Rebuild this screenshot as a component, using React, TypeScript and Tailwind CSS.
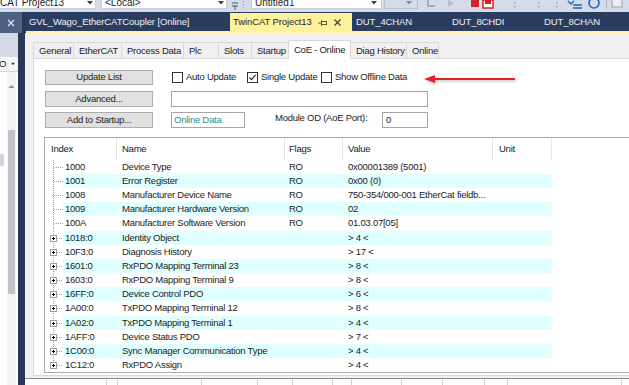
import React from "react";

type Row = { idx: string; name: string; flags?: string; value: string; plus?: boolean };

const rows: Row[] = [
  { idx: "1000", name: "Device Type", flags: "RO", value: "0x00001389 (5001)" },
  { idx: "1001", name: "Error Register", flags: "RO", value: "0x00 (0)" },
  { idx: "1008", name: "Manufacturer Device Name", flags: "RO", value: "750-354/000-001 EtherCat fieldb..." },
  { idx: "1009", name: "Manufacturer Hardware Version", flags: "RO", value: "02" },
  { idx: "100A", name: "Manufacturer Software Version", flags: "RO", value: "01.03.07[05]" },
  { idx: "1018:0", name: "Identity Object", value: "> 4 <", plus: true },
  { idx: "10F3:0", name: "Diagnosis History", value: "> 17 <", plus: true },
  { idx: "1601:0", name: "RxPDO Mapping Terminal 23", value: "> 8 <", plus: true },
  { idx: "1603:0", name: "RxPDO Mapping Terminal 9", value: "> 8 <", plus: true },
  { idx: "16FF:0", name: "Device Control PDO", value: "> 6 <", plus: true },
  { idx: "1A00:0", name: "TxPDO Mapping Terminal 12", value: "> 8 <", plus: true },
  { idx: "1A02:0", name: "TxPDO Mapping Terminal 1", value: "> 4 <", plus: true },
  { idx: "1AFF:0", name: "Device Status PDO", value: "> 7 <", plus: true },
  { idx: "1C00:0", name: "Sync Manager Communication Type", value: "> 4 <", plus: true },
  { idx: "1C12:0", name: "RxPDO Assign", value: "> 4 <", plus: true },
];

const tabs = [
  { label: "General", w: "w-[41px]" },
  { label: "EtherCAT", w: "w-[49px]" },
  { label: "Process Data", w: "w-[63px]" },
  { label: "Plc", w: "w-[36px]" },
  { label: "Slots", w: "w-[34px]" },
  { label: "Startup", w: "w-[38px]" },
  { label: "CoE - Online", w: "w-[63px]", active: true },
  { label: "Diag History", w: "w-[57px]" },
  { label: "Online", w: "w-[33px]" },
];

function Caret({ className = "" }: { className?: string }) {
  return (
    <svg width="6" height="4" viewBox="0 0 6 4" className={className}>
      <path d="M0 0 L6 0 L3 3.5 Z" fill="#3c3c3c" />
    </svg>
  );
}

function TopToolbar() {
  return (
    <div className="h-[12px] bg-[#d6dbe9] flex items-start text-[10px] overflow-hidden">
      <div className="w-[96px] h-[9px] bg-white border-r border-b border-[#c8cedb] flex items-end justify-between pr-[2px]">
        <span className="leading-[10px] mb-[0px] text-[#1e1e1e]">CAT Project13</span>
        <Caret className="mb-[3px]" />
      </div>
      <div className="ml-[5px] w-[126px] h-[9px] bg-white border-x border-b border-[#c8cedb] flex items-end justify-between pl-[3px] pr-[2px]">
        <span className="leading-[10px] mb-[0px] text-[#1e1e1e]">&lt;Local&gt;</span>
        <Caret className="mb-[3px]" />
      </div>
      <svg width="10" height="10" viewBox="0 0 10 10" className="ml-[3px] mt-[1px]">
        <path d="M2 2 L8 2 M2 5 L8 5 M5 5 L5 9" stroke="#555" strokeWidth="1" />
      </svg>
      <svg width="4" height="10" viewBox="0 0 4 10" className="ml-[2px]">
        <rect x="1" y="1" width="1" height="1" fill="#999" />
        <rect x="1" y="4" width="1" height="1" fill="#999" />
        <rect x="1" y="7" width="1" height="1" fill="#999" />
      </svg>
      <div className="ml-[5px] w-[131px] h-[9px] bg-white border-x border-b border-[#c8cedb] flex items-end justify-between pl-[3px] pr-[4px]">
        <span className="leading-[10px] mb-[0px] text-[#1e1e1e]">Untitled1</span>
        <Caret className="mb-[3px]" />
      </div>
      <div className="ml-[2px] w-[34px] h-[9px] border-x border-b border-[#b8bfcf] flex items-end justify-end pr-[5px]">
        <Caret className="mb-[3px] opacity-50" />
      </div>
      <svg width="14" height="9" viewBox="0 0 14 9" className="ml-[8px]">
        <path d="M2 0 L2 6 L9 6" stroke="#9aa0ad" strokeWidth="1.5" fill="none" />
      </svg>
      <svg width="12" height="9" viewBox="0 0 12 9" className="ml-[5px]">
        <path d="M3 0 L9 3 L3 7 Z" fill="#b5bac4" />
      </svg>
      <svg width="32" height="10" viewBox="0 0 32 10" className="ml-[9px]">
        <rect x="5" y="0" width="8" height="7" fill="#d4202a" />
        <rect x="17" y="0" width="10" height="8" fill="#fff" stroke="#d4202a" strokeWidth="1.5" />
        <rect x="19" y="0" width="6" height="4" fill="#d4202a" />
      </svg>
      {[0, 1, 2].map((i) => (
        <svg key={i} width="4" height="10" viewBox="0 0 4 10" className={i === 0 ? "ml-[15px]" : i === 1 ? "ml-[20px]" : "ml-[14px]"}>
          <rect x="1" y="2" width="1.5" height="1.5" fill="#a0a6b2" />
          <rect x="1" y="6" width="1.5" height="1.5" fill="#a0a6b2" />
        </svg>
      ))}
      <svg width="16" height="10" viewBox="0 0 16 10" className="ml-[8px]">
        <path d="M1 1 L4 4 L7 1" stroke="#1e64c8" strokeWidth="1.5" fill="none" />
        <path d="M6 5 L15 5 M6 8 L15 8" stroke="#1e64c8" strokeWidth="1.5" />
      </svg>
      <svg width="14" height="10" viewBox="0 0 14 10" className="ml-[4px]">
        <circle cx="7" cy="3" r="5" stroke="#1e64c8" strokeWidth="1.6" fill="none" />
      </svg>
      <div className="ml-[5px] w-px h-[9px] bg-[#b0b6c4]" />
      <svg width="12" height="10" viewBox="0 0 12 10" className="ml-[4px]">
        <rect x="1" y="-2" width="10" height="9" stroke="#9aa0ad" strokeWidth="1" fill="#eceef3" />
      </svg>
    </div>
  );
}

function DocTabBar() {
  return (
    <div className="flex h-[21px] text-[9.5px] tracking-[-0.1px]">
      <div className="w-[22px] bg-[#4d6082] flex items-center justify-center">
        <svg width="8" height="8" viewBox="0 0 8 8">
          <path d="M1 1 L7 7 M7 1 L1 7" stroke="#e6ebf4" strokeWidth="1.2" />
        </svg>
      </div>
      <div className="w-[4px] bg-[#293955]" />
      <div className="flex-1 flex flex-col bg-[#2b3d5e]">
        <div className="h-[19px] flex">
          <div className="w-[204px] pl-[3px] pt-[2px] flex items-center text-[#eef1f6]">GVL_Wago_EtherCATCoupler [Online]</div>
          <div className="w-[122px] mt-[1px] bg-[#fff29d] pl-[3px] pt-[1px] flex items-center text-[#1e1e1e]">
            <span>TwinCAT Project13</span>
            <svg width="10" height="8" viewBox="0 0 10 8" className="ml-[6px]">
              <path d="M0 4 L3 4 M3.5 1 L3.5 7" stroke="#5a5a3c" strokeWidth="1" />
              <rect x="3.5" y="2.5" width="5" height="3" stroke="#5a5a3c" strokeWidth="1" fill="none" />
            </svg>
            <svg width="7" height="7" viewBox="0 0 7 7" className="ml-[6px]">
              <path d="M0.5 0.5 L6.5 6.5 M6.5 0.5 L0.5 6.5" stroke="#3c3c28" strokeWidth="1.1" />
            </svg>
          </div>
          <div className="w-[96px] pl-[4px] pt-[2px] flex items-center text-[#eef1f6]">DUT_4CHAN</div>
          <div className="w-[92px] pl-[4px] pt-[2px] flex items-center text-[#eef1f6]">DUT_8CHDI</div>
          <div className="flex-1 pl-[4px] pt-[2px] flex items-center text-[#eef1f6]">DUT_8CHAN</div>
        </div>
        <div className="h-[2px] bg-[#fff29d]" />
      </div>
    </div>
  );
}

function LeftPanel() {
  return (
    <div className="w-[18px] flex flex-col bg-white">
      <div className="h-[24px] bg-[#d5dae6]" />
      <div className="h-[15px] bg-[#f5f6f8] border-b border-[#cfd4de] flex items-center text-[9.5px]">
        <span className="-ml-[1px] text-[#1e1e1e]">O</span>
        <Caret className="ml-[4px] scale-75" />
      </div>
      <div className="flex-1 flex">
        <div className="w-[7px] flex flex-col">
          <div className="h-[82px]" />
          <div className="h-[12px] w-[4px] bg-[#cdd3df]" />
        </div>
        <div className="w-[9px] bg-[#f3f3f5] flex flex-col items-center">
          <svg width="7" height="5" viewBox="0 0 7 5" className="mt-[12px]">
            <path d="M0.5 4 L3.5 1 L6.5 4 Z" fill="#8c8c8c" />
          </svg>
          <div className="mt-[41px] w-[7px] h-[164px] bg-[#c2c3c9]" />
        </div>
        <div className="w-[2px]" />
      </div>
    </div>
  );
}

function Checkbox({ checked = false }: { checked?: boolean }) {
  return (
    <div className="w-[11px] h-[11px] border border-[#333] bg-white flex items-center justify-center">
      {checked && (
        <svg width="9" height="9" viewBox="0 0 9 9">
          <path d="M1.5 4.5 L3.5 6.6 L7.6 1.8" stroke="#222" strokeWidth="1.1" fill="none" />
        </svg>
      )}
    </div>
  );
}

function Button({ label }: { label: string }) {
  return (
    <div className="w-[108px] h-full bg-[#e1e1e1] border border-[#adadad] flex items-center justify-center">{label}</div>
  );
}

function TreeLines({ plus, last }: { plus?: boolean; last?: boolean }) {
  return (
    <svg width="18" height="14.2" viewBox="0 0 18 14.2" className="shrink-0" shapeRendering="crispEdges">
      <line x1="8.5" y1="0" x2="8.5" y2={last ? 7 : 14.2} stroke="#a0a0a0" strokeDasharray="1 1" />
      <line x1={plus ? 12 : 9} y1="7.5" x2="18" y2="7.5" stroke="#a0a0a0" strokeDasharray="1 1" />
      {plus && (
        <>
          <rect x="5.5" y="4.5" width="6" height="6" fill="#fff" stroke="#9a9a9a" />
          <line x1="7" y1="7.5" x2="10" y2="7.5" stroke="#000" />
          <line x1="8.5" y1="6" x2="8.5" y2="9" stroke="#000" />
        </>
      )}
    </svg>
  );
}

function ObjectList() {
  return (
    <div className="-ml-[1px] border-l border-t border-b border-[#a9a9a9] bg-white">
      <div className="h-[21.6px] flex items-stretch">
        <div className="w-[72px] pl-[6px] flex items-center border-r border-[#e5e5e5]">Index</div>
        <div className="w-[168px] pl-[5px] flex items-center border-r border-[#e5e5e5]">Name</div>
        <div className="w-[58px] pl-[4px] flex items-center border-r border-[#e5e5e5]">Flags</div>
        <div className="w-[150px] pl-[5px] flex items-center border-r border-[#e5e5e5]">Value</div>
        <div className="w-[59px] pl-[6px] flex items-center border-r border-[#e5e5e5]">Unit</div>
      </div>
      {rows.map((r, i) => (
        <div key={r.idx} className="flex h-[14.2px]">
          <TreeLines plus={r.plus} last={i === rows.length - 1} />
          <div className={`flex w-[489px] items-center ${i % 2 === 1 ? "bg-[#e0ffff]" : ""}`}>
            <div className="w-[54px] pl-[2px]">{r.idx}</div>
            <div className="w-[168px] pl-[5px] whitespace-nowrap">{r.name}</div>
            <div className="w-[58px] pl-[4px]">{r.flags ?? ""}</div>
            <div className="w-[150px] pl-[5px] whitespace-nowrap">{r.value}</div>
            <div className="w-[59px]" />
          </div>
        </div>
      ))}
    </div>
  );
}

function DocArea() {
  return (
    <div className="flex-1 bg-[#f0f0f0] flex flex-col text-[9.5px] tracking-[-0.25px] text-[#222]">
      <div className="h-[7px]" />
      <div className="h-[18px] flex items-end pl-[8px]">
        {tabs.map((t, i) =>
          t.active ? (
            <div key={t.label} className={`${t.w} h-[19px] -mb-px -ml-px relative z-10 bg-white border border-b-0 border-[#d9d9d9] pl-[5px] flex items-center`}>
              {t.label}
            </div>
          ) : (
            <div key={t.label} className={`${t.w} h-[16px] ${i === 0 ? "" : "-ml-px"} bg-[#f0f0f0] border border-b-0 border-[#d9d9d9] pl-[5px] pt-px flex items-center`}>
              {t.label}
            </div>
          )
        )}
      </div>
      <div className="ml-[8px] h-[318px] bg-white border-l border-t border-b border-[#d9d9d9] pt-[11px] pl-[11px] flex flex-col">
        <div className="h-[15px] flex items-center">
          <Button label="Update List" />
          <div className="ml-[19px] w-[75px] flex items-center">
            <Checkbox />
            <span className="ml-[3px]">Auto Update</span>
          </div>
          <div className="w-[74px] flex items-center">
            <Checkbox checked />
            <span className="ml-[3px]">Single Update</span>
          </div>
          <div className="flex items-center">
            <Checkbox />
            <span className="ml-[3px]">Show Offline Data</span>
          </div>
        </div>
        <div className="mt-[6px] h-[16px] flex items-center">
          <Button label="Advanced..." />
          <div className="ml-[18px] w-[257px] h-[16px] border border-[#a6a6a6] bg-white" />
        </div>
        <div className="mt-[5px] h-[16px] flex items-center">
          <Button label="Add to Startup..." />
          <div className="ml-[18px] w-[74px] h-[16px] border border-[#a6a6a6] bg-white pl-[2px] flex items-center text-[#1a9090]">Online Data</div>
          <div className="ml-[30px] w-[107px] -mt-[3px]">Module OD (AoE Port):</div>
          <div className="w-[46px] h-[16px] border border-[#a6a6a6] bg-white pl-[3px] flex items-center">0</div>
        </div>
        <div className="mt-[9px]">
          <ObjectList />
        </div>
      </div>
      <div className="h-[2px]" />
      <div className="flex-1 border-t border-[#8a8a8a] bg-white flex">
        {[82, 11, 84, 56, 35, 40, 19, 50, 41, 42, 23, 114].map((w, i) => (
          <div key={i} className="border-r border-[#d0d0d0]" style={{ width: w }} />
        ))}
      </div>
    </div>
  );
}

function RedArrow() {
  return (
    <svg width="100" height="16" viewBox="0 0 100 16" className="absolute left-[420px] top-[71px]">
      <defs>
        <filter id="sh" x="-10%" y="-50%" width="120%" height="200%">
          <feDropShadow dx="1" dy="1.5" stdDeviation="1" floodColor="#000" floodOpacity="0.25" />
        </filter>
      </defs>
      <g filter="url(#sh)">
        <line x1="13" y1="8" x2="95" y2="8" stroke="#e3242b" strokeWidth="2" />
        <path d="M4 8 L15 4 L15 12 Z" fill="#e3242b" />
      </g>
    </svg>
  );
}

export default function App() {
  return (
    <div className="relative w-[629px] h-[385px] overflow-hidden bg-[#293955] font-['Liberation_Sans',Arial,sans-serif]">
      <TopToolbar />
      <DocTabBar />
      <div className="flex h-[352px]">
        <LeftPanel />
        <div className="w-[7px] bg-[#293955]" />
        <DocArea />
      </div>
      <RedArrow />
    </div>
  );
}
